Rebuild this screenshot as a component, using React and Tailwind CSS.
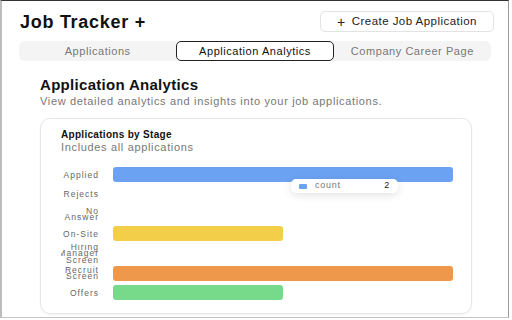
import React from "react";

const rows = [
  { label: ["Applied"], value: 2, color: "bg-[#6ca2f2]" },
  { label: ["Rejects"], value: 0, color: "" },
  { label: ["No", "Answer"], value: 0, color: "" },
  { label: ["On-Site"], value: 1, color: "bg-[#f3cf49]" },
  { label: ["Hiring", "Manager", "Screen"], value: 0, color: "" },
  { label: ["Recruit", "Screen"], value: 2, color: "bg-[#ee984c]" },
  { label: ["Offers"], value: 1, color: "bg-[#77da8a]" },
];

export default function App() {
  return (
    <div
      className="w-[512px] h-[320px] bg-white overflow-hidden relative"
      style={{ fontFamily: '"Liberation Sans", Arial, sans-serif' }}
    >
      <div className="w-[509px] h-[318px] border-t border-t-[#333] border-l-2 border-l-[#bdbdbd] border-r border-r-[#9a9a9a] border-b border-b-[#c4c4c4] flex flex-col">
        {/* Header */}
        <div className="flex items-center justify-between pl-[18px] pr-[14px] pt-[10px]">
          <div className="text-[18px] font-bold text-[#111] tracking-[0.04em] leading-[20px]">
            Job Tracker +
          </div>
          <button className="h-[21px] w-[174px] border border-[#e3e3e3] rounded-[5px] text-[11.5px] tracking-[0.04em] text-[#222] flex items-center justify-center gap-[6px]">
            <span className="text-[14px] leading-none font-light">+</span>
            <span>Create Job Application</span>
          </button>
        </div>
        {/* Tabs */}
        <div className="mx-[17px] mt-[9px] h-[20px] bg-[#f4f4f5] rounded-[6px] grid grid-cols-3 text-[11px] tracking-[0.05em] text-[#777]">
          <div className="flex items-center justify-center">Applications</div>
          <div className="flex items-center justify-center bg-white border border-[#222] rounded-[5px] text-[#111]">
            Application Analytics
          </div>
          <div className="flex items-center justify-center">Company Career Page</div>
        </div>
        {/* Section */}
        <div className="pl-[38px] pt-[15px]">
          <div className="text-[15px] font-bold text-[#111] tracking-[0.02em] leading-[18px]">
            Application Analytics
          </div>
          <div className="text-[11px] text-[#777] tracking-[0.06em] mt-[1px] leading-[12px]">
            View detailed analytics and insights into your job applications.
          </div>
          <div className="mt-[11px] w-[432px] h-[196px] border border-[#e6e6e6] rounded-[10px] shadow-[0_1px_2px_rgba(0,0,0,0.05)] pt-[10px] pl-[20px]">
            <div className="text-[10px] font-bold text-[#111] tracking-[0.03em] leading-[12px]">
              Applications by Stage
            </div>
            <div className="text-[11px] text-[#777] tracking-[0.06em] leading-[12px] mt-[0px]">
              Includes all applications
            </div>
            <div className="relative mt-[12px] flex flex-col">
              {rows.map((r, i) => (
                <div key={i} className="h-[19.7px] flex items-center">
                  <div className="w-[38px] h-[19.7px] overflow-hidden flex flex-col items-end justify-center text-[8.5px] leading-[6.4px] text-[#666] tracking-[0.12em]">
                    {r.label.map((l, j) => (
                      <div key={j} className="whitespace-nowrap">{l}</div>
                    ))}
                  </div>
                  <div className="ml-[14px] w-[340px] h-[15px]">
                    {r.value > 0 && (
                      <div
                        className={`h-[15px] rounded-[3px] ${r.color}`}
                        style={{ width: `${(r.value / 2) * 340}px` }}
                      />
                    )}
                  </div>
                </div>
              ))}
              <div className="absolute left-[230px] top-[14px] w-[107px] h-[14px] bg-white rounded-[5px] shadow-[0_2px_8px_rgba(0,0,0,0.12)] flex items-center px-[8px] text-[9px] tracking-[0.08em]">
                <div className="w-[8px] h-[5px] rounded-[1px] bg-[#6ca2f2]" />
                <span className="ml-[8px] text-[#777]">count</span>
                <span className="ml-auto text-[#222]">2</span>
              </div>
            </div>
          </div>
        </div>
      </div>
    </div>
  );
}
